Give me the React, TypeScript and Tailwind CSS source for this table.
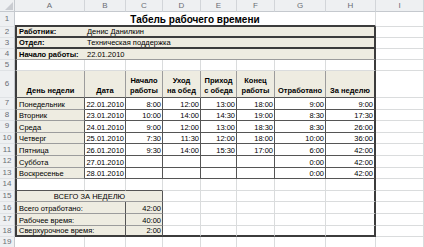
type K = "g" | "s" | "d" | "m" | "n"

type Cell = {
  s?: number
  t?: string
  a?: "l" | "c" | "r"
  bold?: boolean
  title?: boolean
  bg?: boolean
  l?: boolean
  wrap?: boolean
  r?: K
  b?: K
}

const R: Record<K, string> = {
  g: "border-r border-r-[#dadcdd]",
  s: "border-r border-r-[#9c9c9c]",
  d: "border-r border-r-[#555555]",
  m: "border-r-2 border-r-[#3c3c3c]",
  n: "",
}

const B: Record<K, string> = {
  g: "border-b border-b-[#dadcdd]",
  s: "border-b border-b-[#9c9c9c]",
  d: "border-b border-b-[#555555]",
  m: "border-b-2 border-b-[#3c3c3c]",
  n: "",
}

const SPAN: Record<number, string> = {
  1: "col-span-1",
  2: "col-span-2",
  3: "col-span-3",
  7: "col-span-7",
  8: "col-span-8",
}

const ALIGN = { l: "justify-start pl-[2px]", c: "justify-center text-center", r: "justify-end pr-[1px]" }

const blank: Cell = { r: "g", b: "g" }
const colI: Cell = { r: "g", b: "g" }

const days = [
  ["Понедельник", "22.01.2010", "8:00", "12:00", "13:00", "18:00", "9:00", "9:00"],
  ["Вторник", "23.01.2010", "10:00", "14:00", "14:30", "19:00", "8:30", "17:30"],
  ["Среда", "24.01.2010", "9:00", "12:00", "13:00", "18:30", "8:30", "26:00"],
  ["Четверг", "25.01.2010", "7:30", "11:30", "12:00", "18:00", "10:00", "36:00"],
  ["Пятница", "26.01.2010", "9:30", "14:00", "15:30", "17:00", "6:00", "42:00"],
  ["Суббота", "27.01.2010", "", "", "", "", "0:00", "42:00"],
  ["Воскресенье", "28.01.2010", "", "", "", "", "0:00", "42:00"],
]

const heads = [
  "День недели",
  "Дата",
  "Начало\nработы",
  "Уход\nна обед",
  "Приход\nс обеда",
  "Конец\nработы",
  "Отработано",
  "За неделю",
]

const info = [
  ["Работник:", "Денис Данилкин"],
  ["Отдел:", "Техническая поддержка"],
  ["Начало работы:", "22.01.2010"],
]

const totals = [
  ["Всего отработано:", "42:00"],
  ["Рабочее время:", "40:00"],
  ["Сверхурочное время:", "2:00"],
]

function emptyRow(bottomAC: K = "g"): Cell[] {
  return [
    { l: true, r: "g", b: bottomAC },
    { r: "g", b: bottomAC },
    { r: "g", b: bottomAC },
    blank, blank, blank, blank,
    { r: "m", b: "g" },
    colI,
  ]
}

const rows: Cell[][] = [
  [{ s: 8, t: "Табель рабочего времени", a: "c", title: true, r: "g", b: "m" }, colI],
  ...info.map(([k, v], i) => [
    { t: k, bold: true, bg: true, l: true, r: "n" as K, b: (i === 2 ? "s" : "m") as K },
    { s: 7, t: v, bg: true, r: "m" as K, b: (i === 2 ? "s" : "m") as K },
    colI,
  ]),
  emptyRow(),
  [
    ...heads.map((h, i): Cell => ({
      t: h, a: "c", bold: true, bg: true, wrap: true, l: i === 0, r: i === 7 ? "m" : "s", b: "d",
    })),
    colI,
  ],
  ...days.map((d) => [
    ...d.map((v, i): Cell => ({
      t: v, a: i === 0 ? "l" : "r", bg: i === 0, l: i === 0, r: i === 7 ? "m" : "d", b: i === 0 ? "s" : "d",
    })),
    colI,
  ]),
  emptyRow("d"),
  [
    { s: 3, t: "ВСЕГО ЗА НЕДЕЛЮ", a: "c", bg: true, l: true, r: "d", b: "s" },
    blank, blank, blank, blank,
    { r: "m", b: "g" },
    colI,
  ],
  ...totals.map(([k, v], i) => {
    const last = i === 2
    return [
      { s: 2, t: k, a: "l" as const, bg: true, l: true, r: "d" as K, b: (last ? "m" : "s") as K },
      { t: v, a: "r" as const, bg: true, r: "d" as K, b: (last ? "m" : "s") as K },
      ...[0, 1, 2, 3].map((): Cell => ({ r: "g", b: last ? "m" : "g" })),
      { r: "m" as K, b: (last ? "m" : "g") as K },
      colI,
    ]
  }),
  [...Array(9)].map(() => blank),
]

const letters = ["A", "B", "C", "D", "E", "F", "G", "H", "I"]

function SheetCell({ c }: { c: Cell }) {
  let text = "text-[7.5px] leading-[9px] whitespace-nowrap"
  if (c.title) text = "text-[10px] leading-[11px] whitespace-nowrap"
  if (c.wrap) text = "text-[7.5px] leading-[10px] whitespace-pre-line pb-[1px]"
  return (
    <div
      className={[
        "flex min-w-0 items-end text-black",
        SPAN[c.s ?? 1],
        ALIGN[c.a ?? "l"],
        text,
        c.bg ? "bg-[#eeece1]" : "bg-white",
        c.bold || c.title ? "font-bold" : "",
        c.l ? "border-l-2 border-l-[#3c3c3c]" : "",
        R[c.r ?? "g"],
        B[c.b ?? "g"],
      ].join(" ")}
    >
      {c.t}
    </div>
  )
}

export default function App() {
  return (
    <div className="h-[247px] w-[424px] overflow-hidden bg-white font-['Liberation_Sans',Arial,sans-serif]">
      <div className="grid grid-cols-[15px_70px_41px_37px_38px_36px_38px_51px_50px_1fr] grid-rows-[12px_15px_11px_11px_11px_11px_27px_repeat(13,11.6px)]">
        <div className="relative border-r border-b border-r-[#c5c9ce] border-b-[#c5c9ce] bg-[#eef0f2]">
          <svg className="absolute right-[1px] bottom-[1px]" width="8" height="8" viewBox="0 0 8 8">
            <path d="M8 0 L8 8 L0 8 Z" fill="#c9ccd1" />
          </svg>
        </div>
        {letters.map((l) => (
          <div
            key={l}
            className="flex items-center justify-center border-r border-b border-r-[#d2d5d9] border-b-[#c5c9ce] bg-[#eef0f2] text-[8px] text-[#6a6e74]"
          >
            {l}
          </div>
        ))}
        {rows.map((row, ri) => [
          <div
            key={`n${ri}`}
            className="flex items-center justify-center border-r border-b border-r-[#c5c9ce] border-b-[#dfe2e5] bg-[#eef0f2] text-[8px] text-[#6a6e74]"
          >
            {ri + 1}
          </div>,
          ...row.map((c, ci) => <SheetCell key={`c${ri}-${ci}`} c={c} />),
        ])}
      </div>
    </div>
  )
}
